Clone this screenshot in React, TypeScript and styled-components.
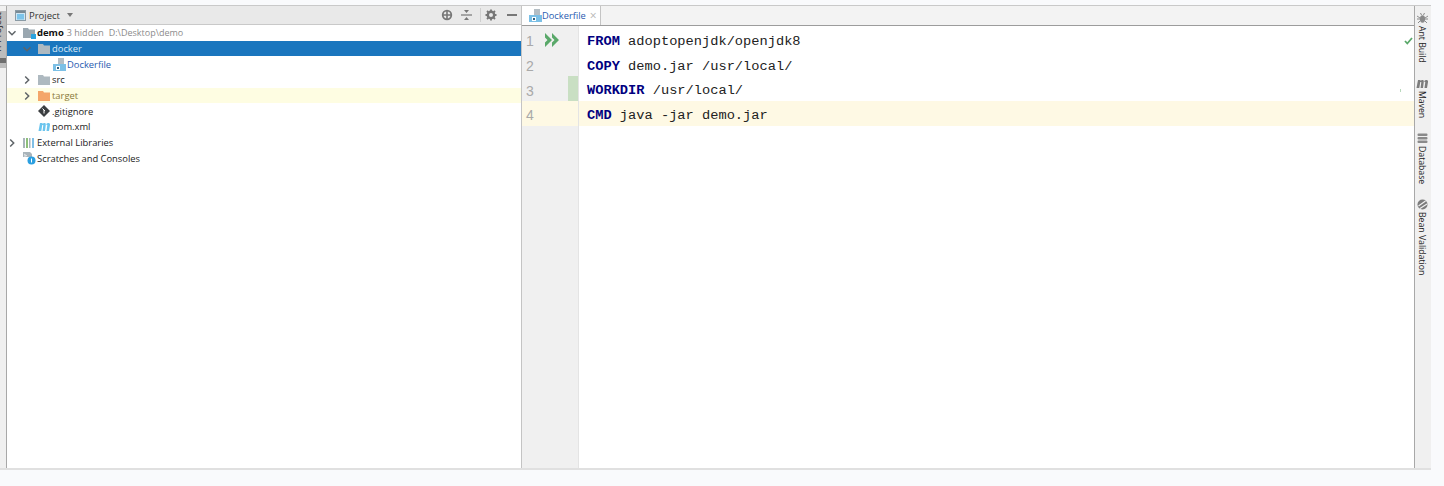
import React from "react";
import styled, { createGlobalStyle } from "styled-components";

const GlobalStyle = createGlobalStyle`
  html, body { margin: 0; padding: 0; background: #f9fafc; }
  body { font-family: "Open Sans", "Liberation Sans", sans-serif; overflow: hidden; }
`;

const Chevron = ({ open }: { open?: boolean }) => (
  <svg width="10" height="10" viewBox="0 0 10 10">
    <path d={open ? "M1.5 3.2 5 6.7 8.5 3.2" : "M3.2 1.5 6.7 5 3.2 8.5"} fill="none" stroke="#5f6468" strokeWidth="1.5" />
  </svg>
);

const Folder = ({ color = "#aeb9c0" }: { color?: string }) => (
  <svg width="12" height="10" viewBox="0 0 12 10">
    <path d="M0 0h5l1 1.5h6V10H0z" fill={color} />
  </svg>
);

const ModuleIcon = () => (
  <svg width="13" height="12" viewBox="0 0 13 12">
    <path d="M0 1h5l1 1.5h6V11H0z" fill="#9aa7b0" />
    <rect x="8" y="7" width="5" height="5" fill="#2ba3e0" />
  </svg>
);

const DockerIcon = () => (
  <svg width="13" height="13" viewBox="0 0 13 13">
    <path d="M5 0h6v6H5z" fill="#b4bec5" />
    <path d="M0 6h13v7H0z" fill="#7cc0e6" />
    <rect x="3" y="8" width="4" height="4" fill="#fff" />
    <rect x="4" y="9" width="2" height="2" fill="#2d5f80" />
  </svg>
);

const GitIcon = () => (
  <svg width="12" height="12" viewBox="0 0 12 12">
    <path d="M6 0 12 6 6 12 0 6z" fill="#3c3f41" />
    <path d="M4.500 3.500 7 6M6 5v3.500" stroke="#fff" strokeWidth="1" />
  </svg>
);

const MavenIcon = ({ color = "#6cc5ee" }: { color?: string }) => (
  <svg width="12" height="9" viewBox="0 0 12 9">
    <path d="M0.500 9 2 1h2.600L3.300 9zM4 2.800C5 0.800 8 0.300 7.800 2.700L7 9H4.600L5.300 3zM8 2.500C9 0.500 12.300 0.300 12 3L11 9H8.500L9.300 3z" fill={color} />
  </svg>
);

const LibraryIcon = () => (
  <svg width="12" height="10" viewBox="0 0 12 10">
    <rect x="0" y="0" width="2" height="10" fill="#a8b4bb" />
    <rect x="3" y="0" width="2" height="10" fill="#8cbf7a" />
    <rect x="6" y="0" width="1.500" height="10" fill="#a8b4bb" />
    <rect x="9" y="0" width="2" height="10" fill="#7fbfe6" />
  </svg>
);

const ScratchIcon = () => (
  <svg width="13" height="13" viewBox="0 0 13 13">
    <path d="M0 0h7l2 2v3H0z" fill="#a9b4ba" />
    <path d="M1 2l3 2M1 4l2 0" stroke="#fff" strokeWidth="0.700" />
    <circle cx="8.500" cy="8.500" r="4" fill="#2b9fe0" />
    <path d="M8.500 6.500v4" stroke="#fff" strokeWidth="1" />
  </svg>
);

const PaneIcon = () => (
  <svg width="11" height="11" viewBox="0 0 11 11">
    <rect x="0.500" y="0.500" width="10" height="10" fill="#cfe6f3" stroke="#8a9aa4" />
    <rect x="1" y="1" width="9" height="2" fill="#7a8a94" />
    <rect x="2" y="4" width="7" height="5.500" fill="#7cc4ea" />
  </svg>
);

const RunIcon = () => (
  <svg width="15" height="14" viewBox="0 0 15 14">
    <path d="M0 0 7 7 0 14V9.500L2.500 7 0 4.500zM7 0l7 7-7 7V9.500L9.500 7 7 4.500z" fill="#59a869" />
  </svg>
);

const TargetIcon = () => (
  <svg width="12" height="12" viewBox="0 0 12 12">
    <circle cx="6" cy="6" r="5.200" fill="#777" />
    <circle cx="6" cy="6" r="3.400" fill="#e9e9e9" />
    <path d="M6 1v10M1 6h10" stroke="#777" strokeWidth="1.600" />
  </svg>
);

const CollapseIcon = () => (
  <svg width="11" height="12" viewBox="0 0 11 12">
    <path d="M0 6h11" stroke="#777" strokeWidth="1.200" />
    <path d="M3 1l2.500 3L8 1zM3 11l2.500-3L8 11z" fill="#777" />
  </svg>
);

const GearIcon = () => (
  <svg width="12" height="12" viewBox="0 0 12 12">
    <circle cx="6" cy="6" r="3.200" fill="none" stroke="#777" strokeWidth="2.400" />
    <path d="M6 0.500v2M6 9.500v2M0.500 6h2M9.500 6h2M2 2l1.500 1.500M8.500 8.500 10 10M10 2 8.500 3.500M3.500 8.500 2 10" stroke="#777" strokeWidth="1.800" />
  </svg>
);

const Check = () => (
  <svg width="9" height="8" viewBox="0 0 9 8">
    <path d="M1 4 3.300 6.500 8 1" fill="none" stroke="#59a869" strokeWidth="1.800" />
  </svg>
);

const BugIcon = () => (
  <svg width="11" height="11" viewBox="0 0 11 11">
    <ellipse cx="5.500" cy="6" rx="2.600" ry="3.800" fill="#8a8a8a" />
    <path d="M0 3l3 2M11 3 8 5M0 6h3M11 6H8M1 10l2-2M10 10 8 8M3.500 0l1 2M7.500 0l-1 2" stroke="#8a8a8a" strokeWidth="1" />
  </svg>
);

const DbIcon = () => (
  <svg width="11" height="11" viewBox="0 0 11 11">
    <rect x="0.500" y="0.500" width="10" height="2.500" rx="1" fill="#8a8a8a" />
    <rect x="0.500" y="4" width="10" height="2.500" rx="1" fill="#8a8a8a" />
    <rect x="0.500" y="7.500" width="10" height="2.500" rx="1" fill="#8a8a8a" />
  </svg>
);

const BeanIcon = () => (
  <svg width="11" height="11" viewBox="0 0 11 11">
    <circle cx="5.500" cy="5.500" r="5" fill="#7c7c7c" />
    <path d="M1.500 7 8.500 2M3 9.500 10 5" stroke="#f0f0f0" strokeWidth="1.200" />
  </svg>
);

const treeRows = [
  { key: "docker", depth: 1, chevron: "open", icon: <Folder />, label: "docker", selected: true },
  { key: "file", depth: 2, icon: <DockerIcon />, label: "Dockerfile", blue: true },
  { key: "src", depth: 1, chevron: "closed", icon: <Folder />, label: "src" },
  { key: "target", depth: 1, chevron: "closed", icon: <Folder color="#f4a66a" />, label: "target", ignored: true },
  { key: "git", depth: 1, icon: <GitIcon />, label: ".gitignore" },
  { key: "pom", depth: 1, icon: <MavenIcon />, label: "pom.xml" },
  { key: "libs", depth: 0, chevron: "closed", icon: <LibraryIcon />, label: "External Libraries" },
  { key: "scratch", depth: 0, icon: <ScratchIcon />, label: "Scratches and Consoles" },
];

const codeLines = [
  { kw: "FROM", rest: " adoptopenjdk/openjdk8" },
  { kw: "COPY", rest: " demo.jar /usr/local/" },
  { kw: "WORKDIR", rest: " /usr/local/" },
  { kw: "CMD", rest: " java -jar demo.jar" },
];

const toolItems = [
  { icon: <BugIcon />, label: "Ant Build" },
  { icon: <MavenIcon color="#7c7c7c" />, label: "Maven" },
  { icon: <DbIcon />, label: "Database" },
  { icon: <BeanIcon />, label: "Bean Validation" },
];

const App = () => {
  return (
    <Page>
      <GlobalStyle />
      <Workspace>
        <LeftStrip>
          <StripTab>
            <StripTabText>1: Project</StripTabText>
            <StripMark />
          </StripTab>
        </LeftStrip>
        <ProjectPane>
          <PaneHeader>
            <PaneIcon />
            <PaneTitle>Project</PaneTitle>
            <DropArrow />
            <HeaderTools>
              <TargetIcon />
              <CollapseIcon />
              <ToolSep />
              <GearIcon />
              <MinusBar />
            </HeaderTools>
          </PaneHeader>
          <Tree>
            <Row $depth={0}>
              <ChevronSlot><Chevron open /></ChevronSlot>
              <IconSlot><ModuleIcon /></IconSlot>
              <RootName>demo</RootName>
              <Hint>3 hidden</Hint>
              <Hint>D:\Desktop\demo</Hint>
            </Row>
            {treeRows.map((r) => (
              <Row key={r.key} $depth={r.depth} $selected={r.selected} $ignored={r.ignored}>
                <ChevronSlot>{r.chevron && <Chevron open={r.chevron === "open"} />}</ChevronSlot>
                <IconSlot>{r.icon}</IconSlot>
                <RowLabel $selected={r.selected} $blue={r.blue} $ignored={r.ignored}>{r.label}</RowLabel>
              </Row>
            ))}
          </Tree>
        </ProjectPane>
        <EditorPane>
          <TabBar>
            <FileTab>
              <DockerIcon />
              <FileTabName>Dockerfile</FileTabName>
              <TabClose>×</TabClose>
            </FileTab>
          </TabBar>
          <EditorBody>
            <Gutter>
              {codeLines.map((l, i) => (
                <GutterLine key={l.kw} $current={i === 3}>
                  <LineNo>{i + 1}</LineNo>
                  <RunSlot>{i === 0 && <RunIcon />}</RunSlot>
                  <ChangeMark $on={i === 2} />
                </GutterLine>
              ))}
            </Gutter>
            <Code>
              {codeLines.map((l, i) => (
                <CodeLine key={l.kw} $current={i === 3}>
                  <Keyword>{l.kw}</Keyword>
                  {l.rest}
                </CodeLine>
              ))}
            </Code>
            <StatusCheck><Check /></StatusCheck>
            <ScrollMark />
          </EditorBody>
        </EditorPane>
        <RightStrip>
          {toolItems.map((t) => (
            <ToolItem key={t.label}>
              <ToolIconBox>{t.icon}</ToolIconBox>
              <ToolLabel>{t.label}</ToolLabel>
            </ToolItem>
          ))}
        </RightStrip>
      </Workspace>
    </Page>
  );
};
export default App;

// styled-components -----------------
const Page = styled.div`
  width: 1444px;
  height: 486px;
  background: #f9fafc;
  padding-top: 5px;
  box-sizing: border-box;
`;

const Workspace = styled.div`
  display: flex;
  width: 1431px;
  height: 465px;
  background: #fff;
  border-top: 1px solid #c9c9c9;
  border-bottom: 2px solid #e0e0e0;
  box-sizing: border-box;
`;

const LeftStrip = styled.div`
  width: 6px;
  flex: none;
  background: #f0f0f0;
  border-right: 1px solid #a8a8a8;
  padding-top: 5px;
`;

const StripTab = styled.div`
  width: 6px;
  height: 57px;
  background: #bdbdbd;
  overflow: hidden;
  display: flex;
  flex-direction: column;
  align-items: flex-end;
`;

const StripTabText = styled.span`
  writing-mode: vertical-rl;
  transform: rotate(180deg);
  font-size: 9.5px;
  line-height: 13px;
  color: #222;
  white-space: nowrap;
  flex: none;
  margin: 1px 2px 0 0;
`;

const StripMark = styled.span`
  width: 6px;
  height: 5px;
  background: #6f6f6f;
  margin-top: 5px;
  flex: none;
`;

const ProjectPane = styled.div`
  width: 514px;
  flex: none;
  border-right: 1px solid #c4c4c4;
  display: flex;
  flex-direction: column;
`;

const PaneHeader = styled.div`
  height: 18px;
  background: #e9e9e9;
  border-bottom: 1px solid #c9c9c9;
  display: flex;
  align-items: center;
  padding-left: 8px;
  flex: none;
`;

const PaneTitle = styled.span`
  font-size: 9.5px;
  color: #333;
  margin-left: 3px;
`;

const DropArrow = styled.span`
  width: 0;
  height: 0;
  border-left: 3.5px solid transparent;
  border-right: 3.5px solid transparent;
  border-top: 4px solid #777;
  margin-left: 7px;
`;

const HeaderTools = styled.div`
  margin-left: auto;
  display: flex;
  align-items: center;
  gap: 7px;
  padding-right: 4px;
  svg:first-child {
    margin-right: 1px;
  }
`;

const ToolSep = styled.span`
  width: 1px;
  height: 14px;
  background: #cfcfcf;
  margin: 0 -3px 0 1px;
`;

const MinusBar = styled.span`
  width: 10px;
  height: 2px;
  background: #777;
  margin-left: 3px;
`;

const Tree = styled.div`
  display: flex;
  flex-direction: column;
`;

const Row = styled.div<{ $depth: number; $selected?: boolean; $ignored?: boolean }>`
  height: 15.7px;
  display: flex;
  align-items: center;
  padding-left: ${(p) => p.$depth * 15}px;
  background: ${(p) => (p.$selected ? "#1a76be" : p.$ignored ? "#fefde2" : "transparent")};
`;

const ChevronSlot = styled.span`
  width: 11px;
  flex: none;
  margin-left: -1px;
  display: flex;
  align-items: center;
  justify-content: center;
`;

const IconSlot = styled.span`
  width: 14px;
  height: 14px;
  flex: none;
  margin-left: 5px;
  margin-right: 1px;
  display: flex;
  align-items: center;
  justify-content: center;
`;

const RootName = styled.span`
  font-size: 9.5px;
  font-weight: 700;
  color: #111;
  margin-right: 3px;
`;

const Hint = styled.span`
  font-size: 9px;
  color: #8c8c8c;
  margin-right: 5px;
`;

const RowLabel = styled.span<{ $selected?: boolean; $blue?: boolean; $ignored?: boolean }>`
  font-size: 9.4px;
  white-space: nowrap;
  color: ${(p) => (p.$selected ? "#d9e9f5" : p.$blue ? "#2a5bb0" : p.$ignored ? "#8a7a3a" : "#222")};
`;

const EditorPane = styled.div`
  flex: 1;
  min-width: 0;
  display: flex;
  flex-direction: column;
`;

const TabBar = styled.div`
  height: 20px;
  flex: none;
  background: #f3f3f3;
  border-bottom: 1px solid #9c9c9c;
  display: flex;
  box-sizing: border-box;
`;

const FileTab = styled.div`
  width: 79px;
  background: #fff;
  border-right: 1px solid #c4c4c4;
  display: flex;
  align-items: center;
  padding-left: 7px;
  box-sizing: border-box;
`;

const FileTabName = styled.span`
  font-size: 9.3px;
  color: #2a5bb0;
  margin-left: 0;
`;

const TabClose = styled.span`
  font-size: 12px;
  line-height: 1;
  color: #b5b5b5;
  margin-left: 4px;
`;

const EditorBody = styled.div`
  flex: 1;
  position: relative;
  display: flex;
  min-height: 0;
`;

const Gutter = styled.div`
  width: 57px;
  flex: none;
  background: #f0f0f0;
  box-sizing: border-box;
  border-right: 1px solid #e4e4e4;
  padding-top: 1px;
`;

const GutterLine = styled.div<{ $current?: boolean }>`
  height: 24.7px;
  display: flex;
  align-items: center;
  background: ${(p) => (p.$current ? "#fef9e4" : "transparent")};
`;

const LineNo = styled.span`
  width: 22px;
  padding-left: 4px;
  padding-top: 4px;
  box-sizing: border-box;
  font-family: "Liberation Sans", sans-serif;
  font-size: 14px;
  color: #a9a9a9;
`;

const RunSlot = styled.span`
  width: 24px;
  display: flex;
  align-items: flex-start;
  height: 100%;
  padding-top: 6px;
  padding-left: 1px;
  box-sizing: border-box;
`;

const ChangeMark = styled.span<{ $on?: boolean }>`
  width: 10px;
  height: 100%;
  background: ${(p) => (p.$on ? "#c9dfc3" : "transparent")};
`;

const Code = styled.div`
  flex: 1;
  min-width: 0;
  padding-top: 1px;
`;

const CodeLine = styled.div<{ $current?: boolean }>`
  height: 24.7px;
  line-height: 30.6px;
  padding-left: 8px;
  font-family: "Liberation Mono", monospace;
  font-size: 13.7px;
  color: #222;
  white-space: pre;
  background: ${(p) => (p.$current ? "#fef9e4" : "transparent")};
`;

const Keyword = styled.span`
  font-weight: 700;
  color: #000080;
`;

const StatusCheck = styled.span`
  position: absolute;
  top: 2px;
  right: 1px;
`;

const ScrollMark = styled.span`
  position: absolute;
  top: 63px;
  right: 13px;
  width: 1px;
  height: 3px;
  background: #b8d8bc;
`;

const RightStrip = styled.div`
  width: 17px;
  flex: none;
  background: #f0f0f0;
  border-left: 1px solid #a8a8a8;
  box-sizing: border-box;
  display: flex;
  flex-direction: column;
  align-items: center;
  gap: 15px;
  padding: 7px 2px 0 0;
`;

const ToolItem = styled.div`
  display: flex;
  flex-direction: column;
  align-items: center;
  gap: 2px;
`;

const ToolIconBox = styled.span`
  height: 11px;
  display: flex;
  align-items: center;
  justify-content: center;
`;

const ToolLabel = styled.span`
  writing-mode: vertical-rl;
  font-size: 8.7px;
  line-height: 12px;
  color: #222;
  white-space: nowrap;
`;
